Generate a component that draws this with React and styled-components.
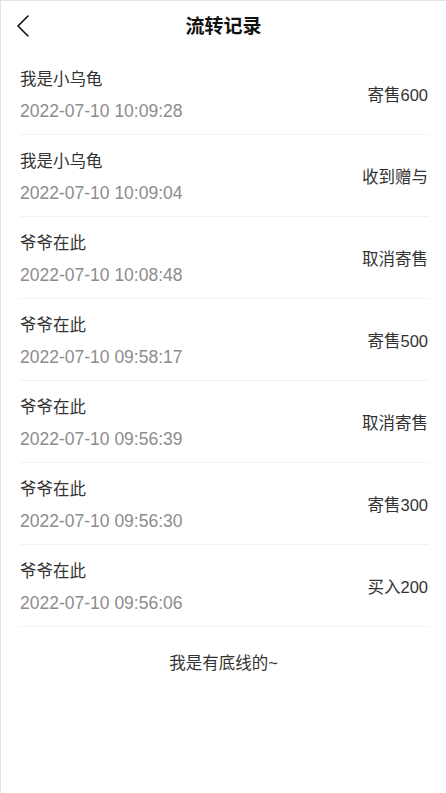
import React from "react";
import styled, { createGlobalStyle } from "styled-components";

const GlobalStyle = createGlobalStyle`
  html, body {
    margin: 0;
    padding: 0;
    background: #fff;
  }
  body {
    font-family: "Liberation Sans", "Noto Sans CJK SC", sans-serif;
  }
`;

const records = [
  { name: "我是小乌龟", time: "2022-07-10 10:09:28", action: "寄售600" },
  { name: "我是小乌龟", time: "2022-07-10 10:09:04", action: "收到赠与" },
  { name: "爷爷在此", time: "2022-07-10 10:08:48", action: "取消寄售" },
  { name: "爷爷在此", time: "2022-07-10 09:58:17", action: "寄售500" },
  { name: "爷爷在此", time: "2022-07-10 09:56:39", action: "取消寄售" },
  { name: "爷爷在此", time: "2022-07-10 09:56:30", action: "寄售300" },
  { name: "爷爷在此", time: "2022-07-10 09:56:06", action: "买入200" },
];

export default function App() {
  return (
    <Page>
      <GlobalStyle />
      <Header>
        <BackButton aria-label="返回">
          <svg width="14" height="24" viewBox="0 0 14 24" fill="none">
            <path
              d="M11 2 L1 12 L11 22"
              stroke="#111"
              strokeWidth="1.6"
              strokeLinecap="round"
              strokeLinejoin="round"
            />
          </svg>
        </BackButton>
        <Title>流转记录</Title>
      </Header>
      <List>
        {records.map((r, i) => (
          <Row key={i}>
            <Info>
              <Name>{r.name}</Name>
              <Time>{r.time}</Time>
            </Info>
            <Action>{r.action}</Action>
          </Row>
        ))}
      </List>
      <Footer>我是有底线的~</Footer>
    </Page>
  );
}

const Page = styled.div`
  min-height: 793px;
  box-sizing: border-box;
  border-top: 1px solid #e2e2e2;
  border-left: 1px solid #e2e2e2;
  background: #fff;
`;

const Header = styled.div`
  position: relative;
  height: 52px;
  display: flex;
  align-items: center;
  justify-content: center;
`;

const BackButton = styled.div`
  position: absolute;
  left: 16px;
  top: 13px;
  width: 14px;
  height: 24px;
  display: flex;
  cursor: pointer;
`;

const Title = styled.h1`
  margin: 0;
  font-size: 19px;
  font-weight: 700;
  color: #111;
  line-height: 26px;
`;

const List = styled.div`
  padding: 0 17px 0 19px;
`;

const Row = styled.div`
  box-sizing: border-box;
  display: flex;
  align-items: center;
  justify-content: space-between;
  height: 82px;
  padding-top: 2px;
  border-bottom: 1px solid #f2f2f2;
`;

const Info = styled.div`
  display: flex;
  flex-direction: column;
  gap: 4px;
`;

const Name = styled.div`
  font-size: 16.5px;
  line-height: 28px;
  color: #333;
`;

const Time = styled.div`
  font-size: 17.5px;
  line-height: 28px;
  color: #8c8c8c;
`;

const Action = styled.div`
  font-size: 16.5px;
  line-height: 24px;
  color: #333;
  padding-right: 1px;
`;

const Footer = styled.div`
  padding-top: 24px;
  text-align: center;
  font-size: 16.5px;
  line-height: 24px;
  color: #333;
`;
